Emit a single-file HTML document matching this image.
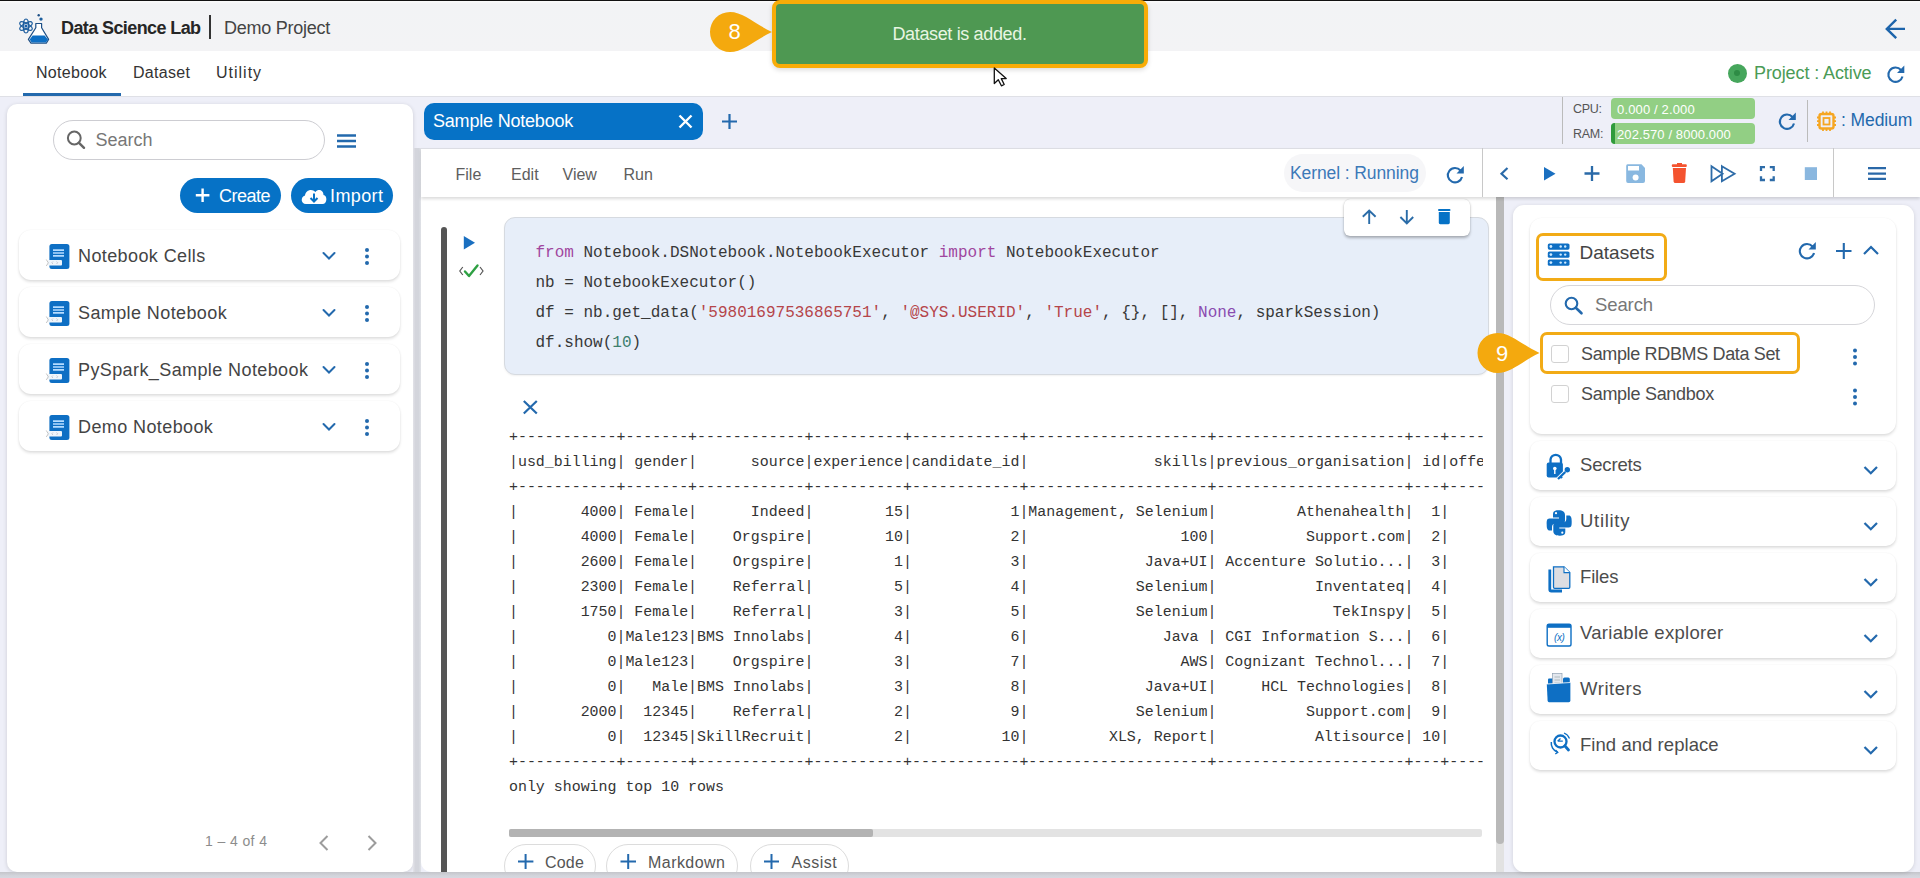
<!DOCTYPE html>
<html><head><meta charset="utf-8">
<style>
*{box-sizing:border-box;margin:0;padding:0}
html,body{width:1920px;height:878px;overflow:hidden}
body{position:relative;background:#eeeff8;font-family:"Liberation Sans",sans-serif;color:#333}
.a{position:absolute}
.t{position:absolute;white-space:nowrap;line-height:1;z-index:3}
.m{font-family:"Liberation Mono",monospace}
svg{position:absolute;overflow:visible;z-index:3}
.card{position:absolute;background:#fff;border-radius:10px;box-shadow:0 2px 4px rgba(0,0,0,.12),0 0 2px rgba(0,0,0,.06)}
.acc{position:absolute;left:1530px;width:366px;height:49px;background:#fff;border-radius:10px;box-shadow:0 2px 3px rgba(0,0,0,.13),0 0 2px rgba(0,0,0,.05)}
.acct{position:absolute;left:50px;font-size:18.5px;color:#4c4c4c;white-space:nowrap;line-height:1;letter-spacing:-0.2px}
</style></head><body>

<!-- top black line -->
<div class="a" style="left:0;top:0;width:1920px;height:1px;background:#111"></div>
<!-- header -->
<div class="a" style="left:0;top:1px;width:1920px;height:50.5px;background:linear-gradient(#fbfbfb,#f2f3f5 3px,#f3f3f5)"></div>
<!-- tab bar -->
<div class="a" style="left:0;top:51px;width:1920px;height:45px;background:#fff"></div>
<div class="a" style="left:0;top:96px;width:1920px;height:1px;background:#dfe0e6"></div>


<!-- HEADER -->
<svg style="left:0;top:0" width="60" height="50" viewBox="0 0 60 50">
 <g fill="none" stroke="#1d5d9e" stroke-width="1.2">
  <ellipse cx="26" cy="26" rx="7" ry="2.7" transform="rotate(90 26 26)"/>
  <ellipse cx="26" cy="26" rx="7" ry="2.7" transform="rotate(30 26 26)"/>
  <ellipse cx="26" cy="26" rx="7" ry="2.7" transform="rotate(-30 26 26)"/>
 </g>
 <circle cx="26" cy="26" r="1.6" fill="#1a5fa8"/>
 <path d="M35.8 23.5 H41.6 V27.8 L48.6 39.4 L46.3 43.2 H31 L28.4 39.4 L35.8 27.8 Z" fill="#fff" stroke="#1d4f86" stroke-width="1.2" stroke-linejoin="round"/>
 <path d="M32.6 35.6 H44.6 L48 39.4 L46 42.6 H31.6 L29.6 39.4 Z" fill="#0e6fc4"/>
 <circle cx="38.7" cy="15.2" r="1.2" fill="#1d4f86"/>
 <circle cx="41" cy="19.1" r="1.7" fill="#1d5f9e"/>
</svg>
<div class="t" style="left:61px;top:18.5px;font-size:18px;font-weight:bold;color:#262626;letter-spacing:-0.6px">Data Science Lab</div>
<div class="a" style="left:209px;top:15px;width:2px;height:24px;background:#333"></div>
<div class="t" style="left:224px;top:18.5px;font-size:18px;color:#444;letter-spacing:-0.25px">Demo Project</div>
<svg style="left:1880px;top:16px" width="30" height="26" viewBox="0 0 30 26">
 <path d="M25 12.9 H7 M16.2 3.6 L6.8 12.9 L16.2 22.2" fill="none" stroke="#1d64ab" stroke-width="2.4" stroke-linejoin="miter"/>
</svg>

<!-- TAB BAR -->
<div class="t" style="left:36px;top:64.5px;font-size:16px;color:#333;letter-spacing:0.3px">Notebook</div>
<div class="t" style="left:133px;top:64.5px;font-size:16px;color:#333;letter-spacing:0.3px">Dataset</div>
<div class="t" style="left:216px;top:64.5px;font-size:16px;color:#333;letter-spacing:1px">Utility</div>
<div class="a" style="left:23px;top:93px;width:98px;height:3px;background:#2369ad"></div>
<div class="a" style="left:1727.5px;top:63.5px;width:19px;height:19px;border-radius:50%;background:#46a65c"></div>
<div class="a" style="left:1734px;top:70px;width:6px;height:6px;border-radius:50%;background:#2e8c45"></div>
<div class="t" style="left:1754px;top:64px;font-size:18px;color:#4a9b56;letter-spacing:-0.1px">Project : Active</div>


<!-- LEFT PANEL -->
<div class="card" style="left:7px;top:103.5px;width:406px;height:768.5px;border-radius:10px;box-shadow:0 1px 4px rgba(0,0,0,.15)"></div>
<div class="a" style="left:53px;top:120px;width:272px;height:40px;border:1px solid #cdcdd2;border-radius:20px"></div>
<svg style="left:0;top:0" width="1" height="1">
 <circle cx="74.3" cy="138" r="6.4" fill="none" stroke="#666" stroke-width="2"/>
 <path d="M79 142.8 L84 147.8" stroke="#666" stroke-width="2.4" stroke-linecap="round"/>
 <path d="M337 135.5 H356 M337 141 H356 M337 146.5 H356" stroke="#2369ad" stroke-width="2.4"/>
</svg>
<div class="t" style="left:95.5px;top:131px;font-size:18px;color:#777">Search</div>
<div class="a" style="left:180px;top:178px;width:101px;height:35px;border-radius:18px;background:#0672c6"></div>
<div class="a" style="left:291px;top:178px;width:102px;height:35px;border-radius:18px;background:#0672c6"></div>
<svg style="left:0;top:0" width="1" height="1">
 <path d="M202.6 188.5 V202 M195.8 195.3 H209.4" stroke="#fff" stroke-width="2.4"/>
 <path d="M306 204 C300.5 204 300.5 196.5 305 195.5 C305.5 190 312 188 315.5 192 C318 188.5 323.5 190 323.5 195 C327.5 195.5 327.5 204 322.5 204 Z" fill="#fff"/>
 <path d="M314 193.5 V201 M310.5 198 L314 201.5 L317.5 198" stroke="#0672c6" stroke-width="2" fill="none"/>
</svg>
<div class="t" style="left:219px;top:186.5px;font-size:18px;color:#fff;letter-spacing:-0.5px">Create</div>
<div class="t" style="left:330px;top:186.5px;font-size:18px;color:#fff;letter-spacing:0.4px">Import</div>
<div class="card" style="left:19px;top:230px;width:381px;height:50px;border-radius:12px;box-shadow:0 2px 3px rgba(0,0,0,.12),0 0 2px rgba(0,0,0,.06)"></div>
<div class="t" style="left:78px;top:246.5px;font-size:18px;color:#444;letter-spacing:0.4px">Notebook Cells</div>
<div class="card" style="left:19px;top:287px;width:381px;height:50px;border-radius:12px;box-shadow:0 2px 3px rgba(0,0,0,.12),0 0 2px rgba(0,0,0,.06)"></div>
<div class="t" style="left:78px;top:303.5px;font-size:18px;color:#444;letter-spacing:0.4px">Sample Notebook</div>
<div class="card" style="left:19px;top:344px;width:381px;height:50px;border-radius:12px;box-shadow:0 2px 3px rgba(0,0,0,.12),0 0 2px rgba(0,0,0,.06)"></div>
<div class="t" style="left:78px;top:360.5px;font-size:18px;color:#444;letter-spacing:0.4px">PySpark_Sample Notebook</div>
<div class="card" style="left:19px;top:401px;width:381px;height:50px;border-radius:12px;box-shadow:0 2px 3px rgba(0,0,0,.12),0 0 2px rgba(0,0,0,.06)"></div>
<div class="t" style="left:78px;top:417.5px;font-size:18px;color:#444;letter-spacing:0.4px">Demo Notebook</div>
<svg style="left:0;top:0" width="1" height="1">
 <rect x="49.4" y="244" width="20" height="25" rx="2.5" fill="#0e6fc4"/>
 <path d="M53 250.2 H64 M53 253 H64 M53 255.9 H64" stroke="#b5dcff" stroke-width="1.7"/>
 <rect x="48" y="260" width="14" height="5.6" rx="1" fill="#eef5fb"/><path d="M53 261.5 L51.8 262.8 L53 264 M56.5 261.5 L57.7 262.8 L56.5 264" stroke="#aab" stroke-width="0.6" fill="none"/>
 <path d="M46.3 259.5 L48.3 262.8 L46.3 266" stroke="#aaa" stroke-width="0.7" fill="none"/>
 <path d="M323.5 253 L329 258.5 L334.5 253" stroke="#2369ad" stroke-width="2" fill="none" stroke-linecap="round"/>
 <circle cx="367" cy="250" r="2" fill="#2369ad"/><circle cx="367" cy="256.5" r="2" fill="#2369ad"/><circle cx="367" cy="263" r="2" fill="#2369ad"/>
 <rect x="49.4" y="301" width="20" height="25" rx="2.5" fill="#0e6fc4"/>
 <path d="M53 307.2 H64 M53 310 H64 M53 312.9 H64" stroke="#b5dcff" stroke-width="1.7"/>
 <rect x="48" y="317" width="14" height="5.6" rx="1" fill="#eef5fb"/><path d="M53 318.5 L51.8 319.8 L53 321 M56.5 318.5 L57.7 319.8 L56.5 321" stroke="#aab" stroke-width="0.6" fill="none"/>
 <path d="M46.3 316.5 L48.3 319.8 L46.3 323" stroke="#aaa" stroke-width="0.7" fill="none"/>
 <path d="M323.5 310 L329 315.5 L334.5 310" stroke="#2369ad" stroke-width="2" fill="none" stroke-linecap="round"/>
 <circle cx="367" cy="307" r="2" fill="#2369ad"/><circle cx="367" cy="313.5" r="2" fill="#2369ad"/><circle cx="367" cy="320" r="2" fill="#2369ad"/>
 <rect x="49.4" y="358" width="20" height="25" rx="2.5" fill="#0e6fc4"/>
 <path d="M53 364.2 H64 M53 367 H64 M53 369.9 H64" stroke="#b5dcff" stroke-width="1.7"/>
 <rect x="48" y="374" width="14" height="5.6" rx="1" fill="#eef5fb"/><path d="M53 375.5 L51.8 376.8 L53 378 M56.5 375.5 L57.7 376.8 L56.5 378" stroke="#aab" stroke-width="0.6" fill="none"/>
 <path d="M46.3 373.5 L48.3 376.8 L46.3 380" stroke="#aaa" stroke-width="0.7" fill="none"/>
 <path d="M323.5 367 L329 372.5 L334.5 367" stroke="#2369ad" stroke-width="2" fill="none" stroke-linecap="round"/>
 <circle cx="367" cy="364" r="2" fill="#2369ad"/><circle cx="367" cy="370.5" r="2" fill="#2369ad"/><circle cx="367" cy="377" r="2" fill="#2369ad"/>
 <rect x="49.4" y="415" width="20" height="25" rx="2.5" fill="#0e6fc4"/>
 <path d="M53 421.2 H64 M53 424 H64 M53 426.9 H64" stroke="#b5dcff" stroke-width="1.7"/>
 <rect x="48" y="431" width="14" height="5.6" rx="1" fill="#eef5fb"/><path d="M53 432.5 L51.8 433.8 L53 435 M56.5 432.5 L57.7 433.8 L56.5 435" stroke="#aab" stroke-width="0.6" fill="none"/>
 <path d="M46.3 430.5 L48.3 433.8 L46.3 437" stroke="#aaa" stroke-width="0.7" fill="none"/>
 <path d="M323.5 424 L329 429.5 L334.5 424" stroke="#2369ad" stroke-width="2" fill="none" stroke-linecap="round"/>
 <circle cx="367" cy="421" r="2" fill="#2369ad"/><circle cx="367" cy="427.5" r="2" fill="#2369ad"/><circle cx="367" cy="434" r="2" fill="#2369ad"/>
 <path d="M327.5 836 L320.5 843 L327.5 850" stroke="#9c9c9c" stroke-width="2" fill="none"/>
 <path d="M368.5 836 L375.5 843 L368.5 850" stroke="#9c9c9c" stroke-width="2" fill="none"/>
</svg>
<div class="t" style="left:205px;top:834px;font-size:14px;color:#8c8c8c;letter-spacing:0.4px">1 &#8211; 4 of 4</div>


<!-- NOTEBOOK -->
<div class="a" style="left:424px;top:103px;width:279px;height:37px;border-radius:10px;background:#0672c6"></div>
<div class="t" style="left:433px;top:112px;font-size:18px;color:#fff;letter-spacing:-0.2px">Sample Notebook</div>
<svg style="left:0;top:0" width="1" height="1">
 <path d="M679.5 115.5 L691.5 127.5 M691.5 115.5 L679.5 127.5" stroke="#fff" stroke-width="2.4"/>
 <path d="M729.5 114 V129 M722 121.5 H737" stroke="#2369ad" stroke-width="2.2"/>
</svg>
<!-- toolbar -->
<div class="a" style="left:421px;top:148px;width:1499px;height:49px;background:#fff;border-top:1px solid #dcdde3;box-shadow:0 2px 3px rgba(0,0,0,.14);z-index:2"></div>
<div class="t" style="left:455.5px;top:166.5px;font-size:16px;color:#5e5e5e">File</div>
<div class="t" style="left:511px;top:166.5px;font-size:16px;color:#5e5e5e">Edit</div>
<div class="t" style="left:562.5px;top:166.5px;font-size:16px;color:#5e5e5e">View</div>
<div class="t" style="left:623.5px;top:166.5px;font-size:16px;color:#5e5e5e">Run</div>
<div class="a" style="left:1284px;top:154px;width:142px;height:38px;border-radius:19px;background:#f6f6f8;z-index:3"></div>
<div class="t" style="left:1290px;top:164.5px;font-size:17.5px;color:#3c79b8;letter-spacing:-0.1px">Kernel : Running</div>
<div class="a" style="left:1482px;top:148px;width:1px;height:49px;background:#c8c8c8;z-index:3"></div>
<div class="a" style="left:1833px;top:148px;width:1px;height:49px;background:#c8c8c8;z-index:3"></div>
<!-- content panel -->
<div class="a" style="left:413px;top:148px;width:8px;height:724px;background:linear-gradient(90deg,#e2e2e8,#d4d5dc 30%,#d3d5dc 70%,#e0e2e7)"></div>
<div class="a" style="left:421px;top:197px;width:1075px;height:675px;background:#fff;border-radius:0 0 0 10px"></div>
<div class="a" style="left:1496px;top:197px;width:8px;height:675px;background:#e2e2e2"></div>
<div class="a" style="left:1496px;top:197px;width:8px;height:647px;background:#b9b9b9;border-radius:0 0 4px 4px"></div>
<!-- cell bar -->
<div class="a" style="left:440.5px;top:227px;width:6px;height:645px;background:#555;border-radius:3px 3px 0 0"></div>
<!-- code cell -->
<div class="a" style="left:504px;top:217px;width:985px;height:158px;background:#e7eef9;border:1px solid #d6dae0;border-radius:11px;box-shadow:0 1px 2px rgba(0,0,0,.06)"></div>

<pre class="a m" style="left:535.5px;top:238px;font-size:16px;line-height:30px;color:#383838"><span style="color:#a0469f">from</span> Notebook.DSNotebook.NotebookExecutor <span style="color:#a0469f">import</span> NotebookExecutor
nb = NotebookExecutor()
df = nb.get_data(<span style="color:#b5454a">'59801697536865751'</span>, <span style="color:#b5454a">'@SYS.USERID'</span>, <span style="color:#b5454a">'True'</span>, {}, [], <span style="color:#8a4bb0">None</span>, sparkSession)
df.show(<span style="color:#3d7f6e">10</span>)</pre>
<div class="a" style="left:509px;top:424.5px;width:974px;height:400px;overflow:hidden">
<pre class="a m" style="left:0;top:0;font-size:14.93px;line-height:25px;color:#333">+-----------+-------+------------+----------+------------+--------------------+---------------------+---+------------------------------
|usd_billing| gender|      source|experience|candidate_id|              skills|previous_organisation| id|offer_letter
+-----------+-------+------------+----------+------------+--------------------+---------------------+---+------------------------------
|       4000| Female|      Indeed|        15|           1|Management, Selenium|         Athenahealth|  1|
|       4000| Female|    Orgspire|        10|           2|                 100|          Support.com|  2|
|       2600| Female|    Orgspire|         1|           3|             Java+UI| Accenture Solutio...|  3|
|       2300| Female|    Referral|         5|           4|            Selenium|           Inventateq|  4|
|       1750| Female|    Referral|         3|           5|            Selenium|             TekInspy|  5|
|          0|Male123|BMS Innolabs|         4|           6|               Java | CGI Information S...|  6|
|          0|Male123|    Orgspire|         3|           7|                 AWS| Cognizant Technol...|  7|
|          0|   Male|BMS Innolabs|         3|           8|             Java+UI|     HCL Technologies|  8|
|       2000|  12345|    Referral|         2|           9|            Selenium|          Support.com|  9|
|          0|  12345|SkillRecruit|         2|          10|         XLS, Report|           Altisource| 10|
+-----------+-------+------------+----------+------------+--------------------+---------------------+---+------------------------------
only showing top 10 rows</pre>
</div>
<div class="a" style="left:509px;top:829px;width:973px;height:8px;background:#e3e3e3;border-radius:2px"></div>
<div class="a" style="left:509px;top:829px;width:364px;height:8px;background:#b3b3b3;border-radius:2px"></div>

<!-- nb icons -->
<svg style="left:0;top:0" width="1" height="1">
 <path d="M1460.5 170.5 A7.2 7.2 0 1 0 1462 177" fill="none" stroke="#2369ad" stroke-width="2.1"/>
 <path d="M1463.8 166 L1463.8 173.5 L1456.5 173.5 Z" fill="#2369ad"/>
 <path d="M1507.5 168 L1501.5 173.7 L1507.5 179.3" fill="none" stroke="#2a6aa8" stroke-width="2.2"/>
 <path d="M1544 167 L1555.5 173.7 L1544 180.4 Z" fill="#1a6fc0"/>
 <path d="M1592 166 V181 M1584.5 173.5 H1599.5" stroke="#2a6aa8" stroke-width="2.3"/>
 <path d="M1627.5 164.3 H1641.5 L1645 168 V181 Q1645 183 1643 183 H1628 Q1626.2 183 1626.2 181 V166 Q1626.2 164.3 1627.5 164.3 Z" fill="#89b8e0"/>
 <rect x="1628" y="166" width="11" height="4.5" fill="#fff"/>
 <circle cx="1635.6" cy="177.6" r="3" fill="#fff"/>
 <rect x="1671.8" y="164.3" width="15" height="2.6" rx="1" fill="#f4532f"/>
 <rect x="1677" y="163" width="5" height="2" fill="#f4532f"/>
 <path d="M1672.8 168 H1686 L1685.2 181.5 Q1685 183 1683.5 183 H1675.3 Q1673.8 183 1673.6 181.5 Z" fill="#f4532f"/>
 <path d="M1711.5 166.2 L1722.6 173.7 L1711.5 181.2 Z M1721.9 166.2 L1734.6 173.7 L1721.9 181.2 Z" fill="none" stroke="#2e6ca8" stroke-width="1.8" stroke-linejoin="miter"/>
 <path d="M1761 171 V167.2 H1765 M1769.8 167.2 H1773.7 V171 M1773.7 176.2 V180 H1769.8 M1765 180 H1761 V176.2" fill="none" stroke="#2e6ca8" stroke-width="2.3"/>
 <rect x="1804.8" y="167.2" width="12.2" height="12.8" fill="#8ab7df"/>
 <path d="M1868 168.2 H1886 M1868 173.6 H1886 M1868 178.9 H1886" stroke="#2a68a8" stroke-width="2.3"/>
 <!-- run + check -->
 <path d="M463.8 236 L475 242.7 L463.8 249.4 Z" fill="#1a6fc0"/>
 <path d="M462.8 267 L459.8 271 L462.8 275 M480 267 L483 271 L480 275" fill="none" stroke="#555" stroke-width="1.2"/>
 <path d="M465 271.5 L469 276 L477.5 265.5" fill="none" stroke="#2ea043" stroke-width="2.4" stroke-linecap="round" stroke-linejoin="round"/>
 <path d="M523.8 401 L536.8 413.5 M536.8 401 L523.8 413.5" stroke="#2369ad" stroke-width="2.2"/>
</svg>
<!-- cell popup -->
<div class="a" style="left:1344px;top:199px;width:126px;height:37px;background:#fff;border-radius:6px;box-shadow:0 2px 3px rgba(0,0,0,.28),0 0 1px rgba(0,0,0,.2)"></div>
<svg style="left:0;top:0" width="1" height="1">
 <path d="M1369.2 211 V224 M1362.8 216.8 L1369.2 210.5 L1375.6 216.8" fill="none" stroke="#2a6ca8" stroke-width="1.9"/>
 <path d="M1406.8 210 V223 M1400.4 217 L1406.8 223.4 L1413.2 217" fill="none" stroke="#2a6ca8" stroke-width="1.9"/>
 <rect x="1438" y="208.9" width="12.5" height="2.2" rx="1" fill="#0672c6"/>
 <path d="M1438.8 212 H1449.8 V222.8 Q1449.8 224.2 1448.4 224.2 H1440.2 Q1438.8 224.2 1438.8 222.8 Z" fill="#0672c6"/>
</svg>
<!-- bottom buttons -->
<div class="a" style="left:504px;top:844px;width:92px;height:44px;border:1px solid #dcdcdc;border-radius:22px"></div>
<div class="a" style="left:606px;top:844px;width:132px;height:44px;border:1px solid #dcdcdc;border-radius:22px"></div>
<div class="a" style="left:749.5px;top:844px;width:99.5px;height:44px;border:1px solid #dcdcdc;border-radius:22px"></div>
<svg style="left:0;top:0" width="1" height="1">
 <path d="M525.6 854 V869 M518 861.5 H533.4 M628.2 854 V869 M620.5 861.5 H636 M771.5 854 V869 M764 861.5 H779" stroke="#2369ad" stroke-width="2"/>
</svg>
<div class="t" style="left:545px;top:854.5px;font-size:16px;color:#555;letter-spacing:0.2px">Code</div>
<div class="t" style="left:648px;top:854.5px;font-size:16px;color:#555;letter-spacing:0.45px">Markdown</div>
<div class="t" style="left:791.5px;top:854.5px;font-size:16px;color:#555;letter-spacing:0.5px">Assist</div>
<!-- bottom band -->
<div class="a" style="left:0;top:872px;width:1920px;height:6px;background:linear-gradient(#c4c5ca,#d2d4db 60%,#d6d8e0)"></div>
<!-- CPU RAM -->
<div class="a" style="left:1562px;top:97px;width:1px;height:47px;background:#bbb"></div>
<div class="t" style="left:1573px;top:102.5px;font-size:12.5px;color:#555;letter-spacing:-0.3px">CPU:</div>
<div class="t" style="left:1573px;top:127.5px;font-size:12.5px;color:#555;letter-spacing:-0.3px">RAM:</div>
<div class="a" style="left:1611px;top:98px;width:144px;height:21px;border-radius:4px;background:#92cf84"></div>
<div class="a" style="left:1611px;top:123px;width:144px;height:21px;border-radius:4px;background:#92cf84;overflow:hidden"><div class="a" style="left:0;top:0;width:4px;height:21px;background:#2f9a3c"></div></div>
<div class="t" style="left:1617px;top:102.5px;font-size:13px;color:#fff;letter-spacing:0.15px">0.000 / 2.000</div>
<div class="t" style="left:1617px;top:127.5px;font-size:13px;color:#fff;letter-spacing:0.1px">202.570 / 8000.000</div>
<div class="a" style="left:1807px;top:100px;width:1px;height:42px;background:#bbb"></div>
<div class="t" style="left:1841px;top:112px;font-size:17.5px;color:#2369ad;letter-spacing:-0.1px">: Medium</div>
<svg style="left:0;top:0" width="1" height="1">
 <path d="M1792.5 117 A7.2 7.2 0 1 0 1794 123.5" fill="none" stroke="#2369ad" stroke-width="2.1"/>
 <path d="M1795.8 112.5 L1795.8 120 L1788.5 120 Z" fill="#2369ad"/>
 <path d="M1901 70 A7.2 7.2 0 1 0 1902.5 76.5" fill="none" stroke="#2369ad" stroke-width="2.1"/>
 <path d="M1904.3 65.5 L1904.3 73 L1897 73 Z" fill="#2369ad"/>
 <rect x="1819.5" y="114" width="14" height="14.5" rx="2" fill="none" stroke="#f5a623" stroke-width="2.4"/>
 <rect x="1823.5" y="118" width="6" height="6.5" fill="none" stroke="#f5a623" stroke-width="1.8"/>
 <path d="M1823 111.5 V114 M1826.5 111.5 V114 M1830 111.5 V114 M1823 128.5 V131 M1826.5 128.5 V131 M1830 128.5 V131 M1817 117.5 H1819.5 M1817 121.2 H1819.5 M1817 125 H1819.5 M1833.5 117.5 H1836 M1833.5 121.2 H1836 M1833.5 125 H1836" stroke="#f5a623" stroke-width="1.8"/>
</svg>


<!-- RIGHT PANEL -->
<div class="card" style="left:1512.5px;top:205px;width:401px;height:667px;border-radius:11px;box-shadow:0 1px 4px rgba(0,0,0,.13)"></div>
<div class="card" style="left:1530px;top:218px;width:366px;height:216px;border-radius:12px;box-shadow:0 2px 3px rgba(0,0,0,.12),0 0 2px rgba(0,0,0,.05)"></div>
<div class="t" style="left:1579.5px;top:243.3px;font-size:19px;color:#444;letter-spacing:0px">Datasets</div>
<div class="a" style="left:1550px;top:285px;width:325px;height:40px;border:1px solid #d6d6da;border-radius:20px"></div>
<div class="t" style="left:1595px;top:296px;font-size:18.5px;color:#777;letter-spacing:-0.1px">Search</div>
<div class="a" style="left:1551px;top:345px;width:18px;height:18px;border:1.5px solid #d2d2d2;border-radius:3px"></div>
<div class="a" style="left:1551px;top:384.5px;width:18px;height:18px;border:1.5px solid #d2d2d2;border-radius:3px"></div>
<div class="t" style="left:1581px;top:345px;font-size:18px;color:#4c4c4c;letter-spacing:-0.35px">Sample RDBMS Data Set</div>
<div class="t" style="left:1581px;top:385px;font-size:18px;color:#4c4c4c;letter-spacing:-0.3px">Sample Sandbox</div>
<svg style="left:0;top:0" width="1" height="1">
  <rect x="1547.8" y="243.4" width="21.7" height="6.3" rx="1.6" fill="#0e6fc4"/>
 <rect x="1547.8" y="251.5" width="21.7" height="6.3" rx="1.6" fill="#0e6fc4"/>
 <rect x="1547.8" y="259.5" width="21.7" height="6.3" rx="1.6" fill="#0e6fc4"/>
 <g fill="#cfeaff"><circle cx="1550.9" cy="246.5" r="1.4"/><circle cx="1560.7" cy="246.5" r="1.2"/><circle cx="1565.2" cy="246.5" r="1.2"/>
 <circle cx="1550.9" cy="254.6" r="1.4"/><circle cx="1560.7" cy="254.6" r="1.2"/><circle cx="1565.2" cy="254.6" r="1.2"/>
 <circle cx="1550.9" cy="262.6" r="1.4"/><circle cx="1560.7" cy="262.6" r="1.2"/><circle cx="1565.2" cy="262.6" r="1.2"/></g>
 <path d="M1812.5 246.5 A7.2 7.2 0 1 0 1814 253" fill="none" stroke="#2369ad" stroke-width="2.1"/>
 <path d="M1815.8 242 L1815.8 249.5 L1808.5 249.5 Z" fill="#2369ad"/>
 <path d="M1843.8 243 V259 M1836 251 H1851.5" stroke="#2369ad" stroke-width="2.1"/>
 <path d="M1864 254 L1871 247 L1878 254" fill="none" stroke="#2369ad" stroke-width="2.2"/>
 <circle cx="1571.5" cy="303.5" r="5.8" fill="none" stroke="#2369ad" stroke-width="2.1"/>
 <path d="M1575.8 307.8 L1581.5 313.3" stroke="#2369ad" stroke-width="2.6" stroke-linecap="round"/>
 <circle cx="1855" cy="350.5" r="2" fill="#2369ad"/><circle cx="1855" cy="357" r="2" fill="#2369ad"/><circle cx="1855" cy="363.5" r="2" fill="#2369ad"/>
 <circle cx="1855" cy="390.5" r="2" fill="#2369ad"/><circle cx="1855" cy="397" r="2" fill="#2369ad"/><circle cx="1855" cy="403.5" r="2" fill="#2369ad"/>
</svg>
<div class="acc" style="top:441px"></div>
<div class="t" style="left:1580px;top:455.5px;font-size:18.5px;color:#4c4c4c;letter-spacing:-0.15px">Secrets</div>
<div class="acc" style="top:497px"></div>
<div class="t" style="left:1580px;top:511.5px;font-size:18.5px;color:#4c4c4c;letter-spacing:0.7px">Utility</div>
<div class="acc" style="top:553px"></div>
<div class="t" style="left:1580px;top:567.5px;font-size:18.5px;color:#4c4c4c;letter-spacing:-0.15px">Files</div>
<div class="acc" style="top:609px"></div>
<div class="t" style="left:1580px;top:623.5px;font-size:18.5px;color:#4c4c4c;letter-spacing:0.3px">Variable explorer</div>
<div class="acc" style="top:665px"></div>
<div class="t" style="left:1580px;top:679.5px;font-size:18.5px;color:#4c4c4c;letter-spacing:0.55px">Writers</div>
<div class="acc" style="top:721px"></div>
<div class="t" style="left:1580px;top:735.5px;font-size:18.5px;color:#4c4c4c;letter-spacing:0.05px">Find and replace</div>
<svg style="left:0;top:0" width="1" height="1">
 <path d="M1864.5 467 L1870.8 473.3 L1877 467" fill="none" stroke="#2369ad" stroke-width="2.2"/>
 <path d="M1864.5 523 L1870.8 529.3 L1877 523" fill="none" stroke="#2369ad" stroke-width="2.2"/>
 <path d="M1864.5 579 L1870.8 585.3 L1877 579" fill="none" stroke="#2369ad" stroke-width="2.2"/>
 <path d="M1864.5 635 L1870.8 641.3 L1877 635" fill="none" stroke="#2369ad" stroke-width="2.2"/>
 <path d="M1864.5 691 L1870.8 697.3 L1877 691" fill="none" stroke="#2369ad" stroke-width="2.2"/>
 <path d="M1864.5 747 L1870.8 753.3 L1877 747" fill="none" stroke="#2369ad" stroke-width="2.2"/>

 <!-- secrets lock+key -->
 <path d="M1550.5 463 V459.5 A5.3 5.3 0 0 1 1561 459.5 V463" fill="none" stroke="#0e6fc4" stroke-width="2.3"/>
 <rect x="1546.7" y="462.6" width="16.2" height="15" rx="2" fill="#0e6fc4"/>
 <circle cx="1554.8" cy="468.5" r="1.8" fill="#fff"/><rect x="1554.1" y="469" width="1.4" height="5" fill="#fff"/>
 <circle cx="1567.3" cy="469.7" r="3.3" fill="#0e6fc4" stroke="#fff" stroke-width="1.2"/>
 <path d="M1565.3 472 L1558 479" stroke="#fff" stroke-width="4"/>
 <path d="M1565.3 472 L1558 479 M1560.5 476.5 L1562 478" stroke="#0e6fc4" stroke-width="2.4"/>
 <!-- python -->
 <path d="M1558.5 510.2 C1553 510.2 1553 512.5 1553 515.5 V517.5 H1559 V518.5 H1549.5 C1546.5 518.5 1546.7 521.5 1546.7 524.5 C1546.7 528 1547.2 530.5 1549.7 530.5 H1552 V527 C1552 524.5 1553.5 523.5 1556 523.5 H1562 C1564 523.5 1565 522.5 1565 520.5 V515 C1565 512 1563 510.2 1558.5 510.2 Z" fill="#0e6fc4"/>
 <path d="M1559.8 535.7 C1565.3 535.7 1565.3 533.5 1565.3 530.5 V528.5 H1559.3 V527.5 H1568.8 C1571.8 527.5 1571.7 524.5 1571.7 521.5 C1571.7 518 1571.2 515.5 1568.7 515.5 H1566.3 V519 C1566.3 521.5 1564.8 522.5 1562.3 522.5 H1556.3 C1554.3 522.5 1553.3 523.5 1553.3 525.5 V531 C1553.3 534 1555.3 535.7 1559.8 535.7 Z" fill="#0e6fc4"/>
 <circle cx="1556" cy="513.2" r="1.1" fill="#fff"/><circle cx="1562.3" cy="532.7" r="1.1" fill="#fff"/>
 <!-- files -->
 <path d="M1549.8 569.5 V589.5 Q1549.8 591 1551.3 591 H1562" fill="none" stroke="#0e6fc4" stroke-width="2.8"/>
 <path d="M1553.5 566.8 H1564 L1569.8 572.6 V587.3 Q1569.8 588.4 1568.7 588.4 H1554.6 Q1553.5 588.4 1553.5 587.3 Z" fill="#dedee2" stroke="#0e6fc4" stroke-width="1.3"/>
 <path d="M1564 566.8 V572.6 H1569.8" fill="#fff" stroke="#0e6fc4" stroke-width="1.1"/>
 <!-- variable explorer -->
 <rect x="1547.2" y="624.2" width="23.8" height="21.8" rx="1.8" fill="#fff" stroke="#0e6fc4" stroke-width="1.4"/>
 <rect x="1547.2" y="624.2" width="23.8" height="3.6" fill="#0e6fc4"/>
 <text x="1559.2" y="641" font-family="Liberation Sans" font-style="italic" font-size="10" fill="#0e6fc4" text-anchor="middle" letter-spacing="-0.5">(x)</text>
 <!-- writers -->
 <rect x="1548" y="678.5" width="6" height="6" rx="1" fill="#0e6fc4"/>
 <rect x="1552.5" y="673.5" width="9.5" height="14" fill="#e3e7ee" stroke="#8fa0b3" stroke-width="0.7"/>
 <path d="M1554.5 677 H1560 M1554.5 680 H1560 M1554.5 683 H1560" stroke="#9aa" stroke-width="0.7"/>
 <rect x="1563" y="677.5" width="6.8" height="8" rx="1.5" fill="#0e6fc4"/>
 <path d="M1546.8 684 L1570.4 682.5 V700.5 Q1570.4 702.2 1568.7 702.2 H1549 Q1547.8 702.2 1547.6 700.5 Z" fill="#0e6fc4"/>
 <path d="M1546.8 684 L1570.4 682.5" stroke="#fff" stroke-width="0.8"/>
 <!-- find replace -->
 <circle cx="1560.5" cy="741.5" r="6" fill="none" stroke="#0e6fc4" stroke-width="2.3"/>
 <path d="M1564.8 745.8 L1568.5 750" stroke="#0e6fc4" stroke-width="2.8" stroke-linecap="round"/>
 <path d="M1557.6 741.2 L1560.5 738.6 M1557.6 741.2 H1562.8" fill="none" stroke="#0e6fc4" stroke-width="1.3"/>
 <path d="M1551.3 742 A9.5 9.5 0 0 0 1557.5 752.2" fill="none" stroke="#0e6fc4" stroke-width="1.5"/>
 <path d="M1555.5 750 L1557.8 752.3 L1555.3 754" fill="none" stroke="#0e6fc4" stroke-width="1.3"/>
 <path d="M1569.5 738.5 A9.5 9.5 0 0 0 1564 733" fill="none" stroke="#0e6fc4" stroke-width="1.3"/>
</svg>


<!-- OVERLAY -->
<div class="a" style="left:772px;top:0px;width:375.5px;height:68px;background:#4e9852;border:4px solid #f8ac07;border-radius:8px;box-shadow:0 2px 5px rgba(0,0,0,.14)"></div>
<div class="t" style="left:776px;top:25px;width:367px;text-align:center;font-size:18px;color:#e8f5e2;letter-spacing:-0.35px">Dataset is added.</div>
<div class="a" style="left:1536px;top:233px;width:130.6px;height:47.8px;border:3.8px solid #f2ab16;border-radius:7px;z-index:4"></div>
<div class="a" style="left:1540px;top:331.6px;width:260px;height:42.6px;border:3.8px solid #f2ab16;border-radius:7px;z-index:4"></div>
<svg style="left:0;top:0" width="1" height="1">
 <path d="M730 12 A20 20 0 1 0 730 52 C743 52 755 40 772 32 C755 24 743 12 730 12 Z" fill="#f4a90e"/>
 <path d="M1497.5 333 A20 20 0 1 0 1497.5 373 C1511 373 1522 361 1539.5 353 C1522 345 1511 333 1497.5 333 Z" fill="#f4a90e"/>
 <path d="M994.3 68 L994.3 83.5 L998.3 79.7 L1001.4 85.8 L1004.2 84.5 L1001.3 78.6 L1006.2 78.6 Z" fill="#fff" stroke="#111" stroke-width="1.3" stroke-linejoin="round"/>
</svg>
<div class="t" style="left:714.5px;top:20.5px;width:40px;text-align:center;font-size:22px;color:#fff">8</div>
<div class="t" style="left:1482px;top:342.5px;width:40px;text-align:center;font-size:22px;color:#fff">9</div>


</body></html>
